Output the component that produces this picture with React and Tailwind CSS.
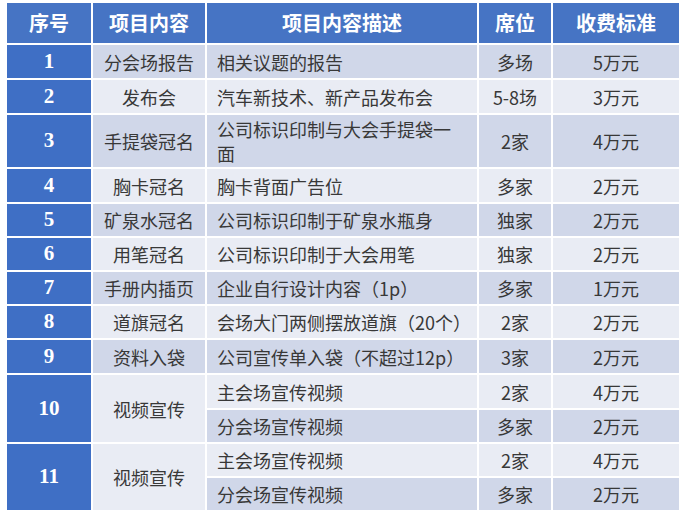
import React from "react";

const DARK = "bg-[#d0d7e9]";
const LIGHT = "bg-[#e9ecf4]";

const rows = [
  { n: "1", item: "分会场报告", desc: ["相关议题的报告"], seat: "多场", fee: "5万元" },
  { n: "2", item: "发布会", desc: ["汽车新技术、新产品发布会"], seat: "5-8场", fee: "3万元" },
  { n: "3", item: "手提袋冠名", desc: ["公司标识印制与大会手提袋一", "面"], seat: "2家", fee: "4万元" },
  { n: "4", item: "胸卡冠名", desc: ["胸卡背面广告位"], seat: "多家", fee: "2万元" },
  { n: "5", item: "矿泉水冠名", desc: ["公司标识印制于矿泉水瓶身"], seat: "独家", fee: "2万元" },
  { n: "6", item: "用笔冠名", desc: ["公司标识印制于大会用笔"], seat: "独家", fee: "2万元" },
  { n: "7", item: "手册内插页", desc: ["企业自行设计内容（1p）"], seat: "多家", fee: "1万元" },
  { n: "8", item: "道旗冠名", desc: ["会场大门两侧摆放道旗（20个）"], seat: "2家", fee: "2万元" },
  { n: "9", item: "资料入袋", desc: ["公司宣传单入袋（不超过12p）"], seat: "3家", fee: "2万元" },
];

const cjk = { fontFamily: '"Noto Sans CJK SC", "Noto Sans", sans-serif' };
const serif = { fontFamily: '"Liberation Serif", "Times New Roman", serif' };

function NumCell({ n, span }) {
  return (
    <div
      className={`bg-[#3f6fc5] text-white font-bold text-[21px] flex items-center justify-center ${span ? "row-span-2" : ""}`}
      style={serif}
    >
      {n}
    </div>
  );
}

function Cell({ children, bg, left, span }) {
  return (
    <div
      className={`${bg} text-[#383838] text-[18px] leading-[24px] whitespace-nowrap flex items-center ${left ? "justify-start pl-[10px]" : "justify-center"} ${span ? "row-span-2" : ""}`}
      style={cjk}
    >
      {children}
    </div>
  );
}

export default function App() {
  return (
    <div className="w-[690px] h-[521px] bg-white pt-[3px] pl-[7px]">
      <div className="grid grid-cols-[84px_112px_270px_72px_126px] grid-rows-[40px_33px_33px_52px_33px_32px_32px_32px_32px_33px_33px_32px_32px_32px] gap-[2px] w-[672px]">
        {["序号", "项目内容", "项目内容描述", "席位", "收费标准"].map((h) => (
          <div
            key={h}
            className="bg-[#4674c4] text-white font-bold text-[20px] flex items-center justify-center"
            style={cjk}
          >
            {h}
          </div>
        ))}
        {rows.map((r, i) => {
          const bg = i % 2 === 0 ? DARK : LIGHT;
          return (
            <React.Fragment key={r.n}>
              <NumCell n={r.n} />
              <Cell bg={bg}>{r.item}</Cell>
              <Cell bg={bg} left>
                <div className="flex flex-col">
                  {r.desc.map((line) => (
                    <span key={line}>{line}</span>
                  ))}
                </div>
              </Cell>
              <Cell bg={bg}>{r.seat}</Cell>
              <Cell bg={bg}>{r.fee}</Cell>
            </React.Fragment>
          );
        })}
        {["10", "11"].map((n) => (
          <React.Fragment key={n}>
            <NumCell n={n} span />
            <Cell bg={LIGHT} span>视频宣传</Cell>
            <Cell bg={LIGHT} left>主会场宣传视频</Cell>
            <Cell bg={LIGHT}>2家</Cell>
            <Cell bg={LIGHT}>4万元</Cell>
            <Cell bg={DARK} left>分会场宣传视频</Cell>
            <Cell bg={DARK}>多家</Cell>
            <Cell bg={DARK}>2万元</Cell>
          </React.Fragment>
        ))}
      </div>
    </div>
  );
}
